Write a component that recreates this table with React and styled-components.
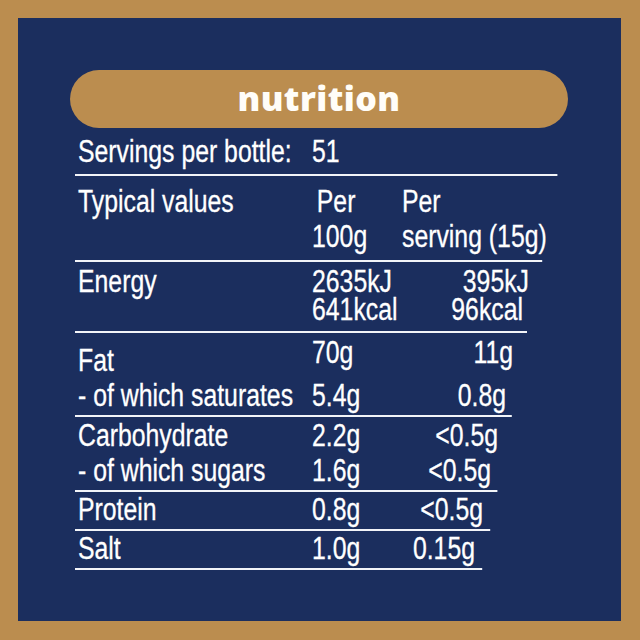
import styled, { createGlobalStyle } from "styled-components";

const GlobalStyle = createGlobalStyle`
  html, body {
    margin: 0;
    padding: 0;
  }
`;

// the label type is a condensed grotesque; Liberation Sans squeezed
// gives those narrow widths, so the table is laid out in unsqueezed units
const SQUEEZE = 0.8;
const TABLE_X = 75;
const sx = (x) => (x - TABLE_X) / SQUEEZE;

const Page = styled.div`
  width: 640px;
  height: 640px;
  box-sizing: border-box;
  padding: 18px 19px 19px 18px;
  background: #bb8d4f;
`;

const Panel = styled.div`
  height: 100%;
  box-sizing: border-box;
  padding-top: 52px;
  background: #1b2e5e;
`;

const Pill = styled.h1`
  margin: 0 53px 0 52px;
  height: 58px;
  box-sizing: border-box;
  padding-bottom: 3px;
  border-radius: 29px;
  background: #bb8d4f;
  color: #fffdf8;
  font-family: "Open Sans", sans-serif;
  font-weight: 800;
  font-size: 34px;
  letter-spacing: 0.4px;
  display: flex;
  align-items: center;
  justify-content: center;
`;

const Table = styled.div`
  margin-left: ${TABLE_X - 18}px;
  color: #ffffff;
  font-family: "Liberation Sans", Arial, sans-serif;
  font-size: 31px;
  -webkit-text-stroke: 0.3px #ffffff;
  transform: scaleX(${SQUEEZE});
  transform-origin: 0 0;
`;

const Section = styled.div`
  width: ${(p) => sx(p.$end)}px;
  padding: ${(p) => p.$pt}px 0 ${(p) => p.$pb}px;
  border-bottom: 2px solid #f2f4f8;
`;

const Row = styled.div`
  display: grid;
  grid-template-columns: ${sx(312) - sx(78)}px 1fr auto;
  align-items: start;
  width: ${(p) => sx(p.$end) - sx(78)}px;
  margin-left: ${sx(78)}px;
  line-height: ${(p) => p.$lh || 35}px;
  white-space: nowrap;
`;

const HeadRow = styled.div`
  display: grid;
  grid-template-columns: ${sx(312) - sx(78)}px ${sx(402) - sx(312)}px auto;
  margin-left: ${sx(78)}px;
  line-height: 35px;
  white-space: nowrap;
`;

const Label = styled.div`
  padding-top: ${(p) => p.$drop || 0}px;
`;

const Value = styled.div`
  text-align: ${(p) => (p.$left ? "left" : "right")};
`;

const Indent = styled.span`
  padding-left: 6px;
`;

export default function App() {
  return (
    <>
      <GlobalStyle />
      <Page>
        <Panel>
          <Pill>nutrition</Pill>
          <Table>
            <Section $end={557} $pt={6} $pb={5}>
              <Row $end={557}>
                <Label>Servings per bottle:</Label>
                <Value $left>51</Value>
                <Value />
              </Row>
            </Section>

            <Section $end={542} $pt={8} $pb={6}>
              <HeadRow>
                <Label>Typical values</Label>
                <Value $left>
                  <Indent>Per</Indent>
                  <br />
                  100g
                </Value>
                <Value $left>
                  Per
                  <br />
                  serving (15g)
                </Value>
              </HeadRow>
            </Section>

            <Section $end={527} $pt={6} $pb={7}>
              <Row $end={529} $lh={28}>
                <Label>Energy</Label>
                <Value $left>2635kJ</Value>
                <Value>395kJ</Value>
              </Row>
              <Row $end={523} $lh={28}>
                <Label />
                <Value $left>641kcal</Value>
                <Value>96kcal</Value>
              </Row>
            </Section>

            <Section $end={512} $pt={2} $pb={2}>
              <Row $end={513}>
                <Label $drop={8}>Fat</Label>
                <Value $left>70g</Value>
                <Value>11g</Value>
              </Row>
              <Row $end={506}>
                <Label>- of which saturates</Label>
                <Value $left>5.4g</Value>
                <Value>0.8g</Value>
              </Row>
            </Section>

            <Section $end={497} $pt={1} $pb={2}>
              <Row $end={498}>
                <Label>Carbohydrate</Label>
                <Value $left>2.2g</Value>
                <Value>&lt;0.5g</Value>
              </Row>
              <Row $end={491}>
                <Label>- of which sugars</Label>
                <Value $left>1.6g</Value>
                <Value>&lt;0.5g</Value>
              </Row>
            </Section>

            <Section $end={490} $pt={0} $pb={2}>
              <Row $end={483}>
                <Label>Protein</Label>
                <Value $left>0.8g</Value>
                <Value>&lt;0.5g</Value>
              </Row>
            </Section>

            <Section $end={482} $pt={0} $pb={2}>
              <Row $end={475}>
                <Label>Salt</Label>
                <Value $left>1.0g</Value>
                <Value>0.15g</Value>
              </Row>
            </Section>
          </Table>
        </Panel>
      </Page>
    </>
  );
}
